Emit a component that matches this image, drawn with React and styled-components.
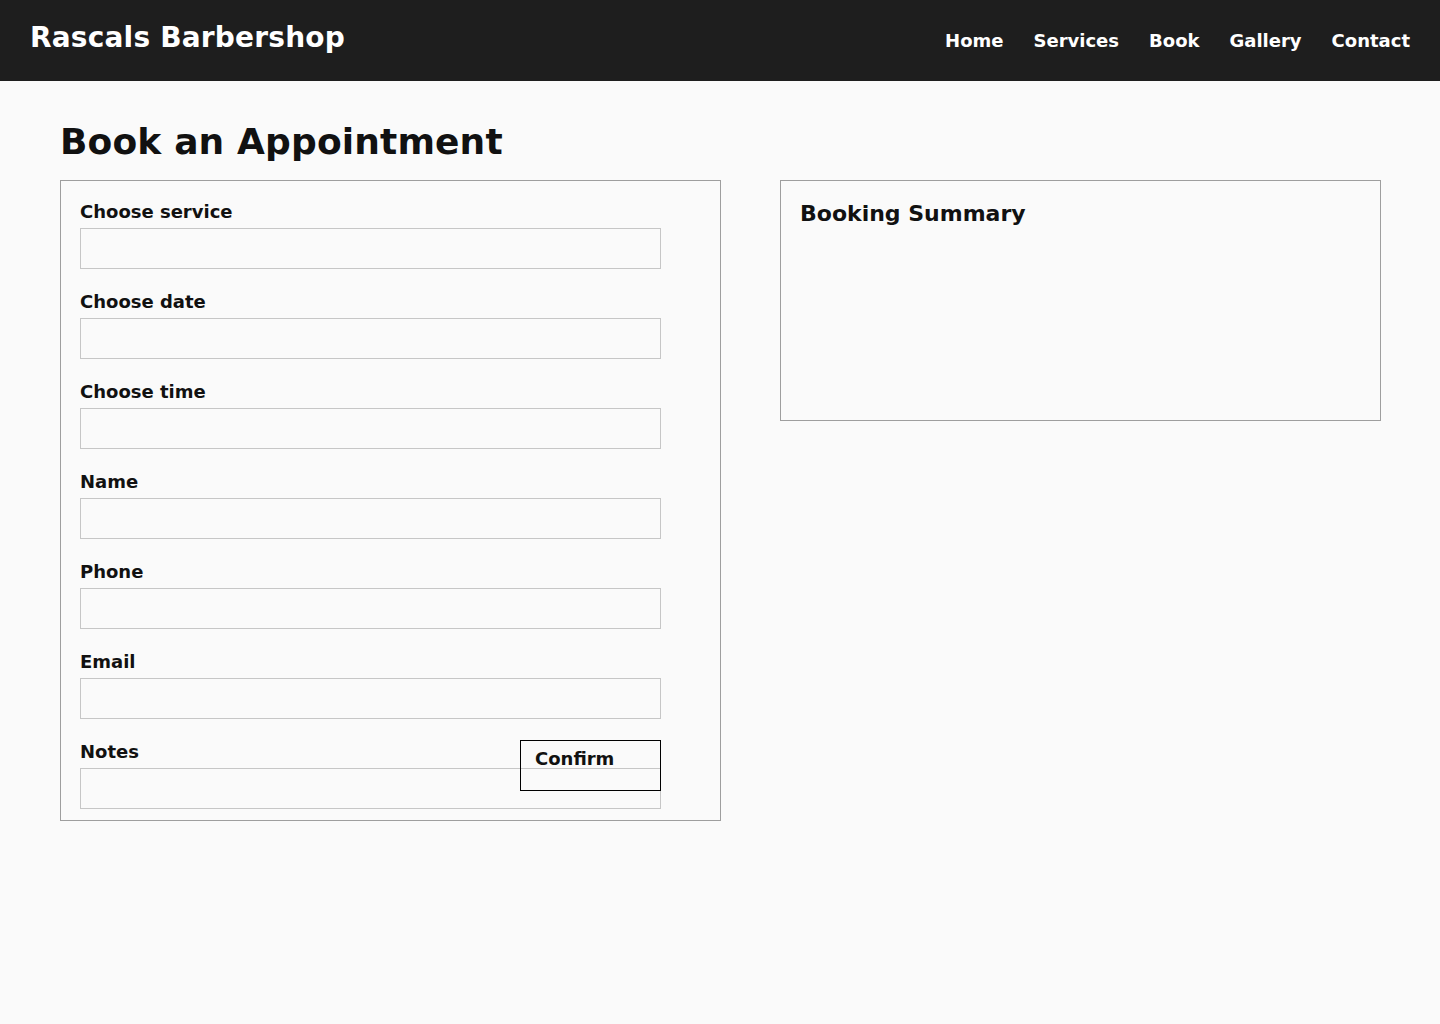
import React from "react";
import styled, { createGlobalStyle } from "styled-components";

const fields = [
  { id: "service", label: "Choose service" },
  { id: "date", label: "Choose date" },
  { id: "time", label: "Choose time" },
  { id: "name", label: "Name" },
  { id: "phone", label: "Phone" },
  { id: "email", label: "Email" },
  { id: "notes", label: "Notes" },
];

const navLinks = ["Home", "Services", "Book", "Gallery", "Contact"];

function App() {
  return (
    <>
      <GlobalStyle />
      <StyledHeader>
        <StyledBrand>Rascals Barbershop</StyledBrand>
        <StyledNav>
          {navLinks.map((link) => (
            <StyledNavLink key={link} href="#">
              {link}
            </StyledNavLink>
          ))}
        </StyledNav>
      </StyledHeader>

      <StyledMain>
        <StyledPageTitle>Book an Appointment</StyledPageTitle>
        <StyledColumns>
          <StyledForm onSubmit={(e) => e.preventDefault()}>
            {fields.map((field) => (
              <StyledField key={field.id}>
                <StyledLabel htmlFor={field.id}>{field.label}</StyledLabel>
                <StyledInput id={field.id} />
              </StyledField>
            ))}
            {/* 버튼이 Notes 입력칸 위에 겹쳐 있음 */}
            <StyledConfirmBtn type="submit">Confirm</StyledConfirmBtn>
          </StyledForm>

          <StyledSummary>
            <StyledSummaryTitle>Booking Summary</StyledSummaryTitle>
          </StyledSummary>
        </StyledColumns>
      </StyledMain>
    </>
  );
}

export default App;

const GlobalStyle = createGlobalStyle`
  body {
    margin: 0;
    background: #fafafa;
    font-family: "DejaVu Sans", "Liberation Sans", sans-serif;
    color: #111111;
  }
`;

const StyledHeader = styled.header`
  box-sizing: border-box;
  height: 81px;
  background: #1e1e1e;
  display: flex;
  align-items: baseline;
  justify-content: space-between;
  padding: 21px 30px 0;
`;

const StyledBrand = styled.div`
  color: #ffffff;
  font-size: 28px;
  font-weight: bold;
  letter-spacing: 0.2px;
`;

const StyledNav = styled.nav`
  display: flex;
  gap: 30px;
`;

const StyledNavLink = styled.a`
  color: #ffffff;
  font-size: 18px;
  font-weight: bold;
  text-decoration: none;
`;

const StyledMain = styled.main`
  padding: 40px 60px;
`;

const StyledPageTitle = styled.h1`
  margin: 0 0 18px;
  font-size: 36px;
  font-weight: bold;
  color: #111111;
  letter-spacing: 0.15px;
`;

const StyledColumns = styled.div`
  display: grid;
  grid-template-columns: 661px 601px;
  column-gap: 59px;
  align-items: start;
`;

const StyledForm = styled.form`
  position: relative;
  box-sizing: border-box;
  border: 1px solid #9e9e9e;
  padding: 20px 19px 11px;
  display: flex;
  flex-direction: column;
  gap: 22px;
`;

const StyledField = styled.div`
  display: flex;
  flex-direction: column;
  gap: 6px;
`;

const StyledLabel = styled.label`
  font-size: 18px;
  font-weight: bold;
  color: #111111;
`;

const StyledInput = styled.input`
  box-sizing: border-box;
  width: 581px;
  height: 41px;
  border: 1px solid #c6c6c6;
  background: #fafafa;
  font-family: inherit;
  font-size: 16px;
  padding: 0 10px;
  outline: none;
`;

const StyledConfirmBtn = styled.button`
  position: absolute;
  top: 559px;
  right: 59px;
  box-sizing: border-box;
  width: 141px;
  height: 51px;
  padding: 7px 14px 0;
  border: 1px solid #000000;
  background: transparent;
  color: #111111;
  font-family: inherit;
  font-size: 18px;
  font-weight: bold;
  display: flex;
  align-items: flex-start;
  cursor: pointer;
`;

const StyledSummary = styled.section`
  box-sizing: border-box;
  border: 1px solid #9e9e9e;
  min-height: 241px;
  padding: 20px 19px;
`;

const StyledSummaryTitle = styled.h2`
  margin: 0;
  font-size: 22px;
  font-weight: bold;
  color: #111111;
`;
